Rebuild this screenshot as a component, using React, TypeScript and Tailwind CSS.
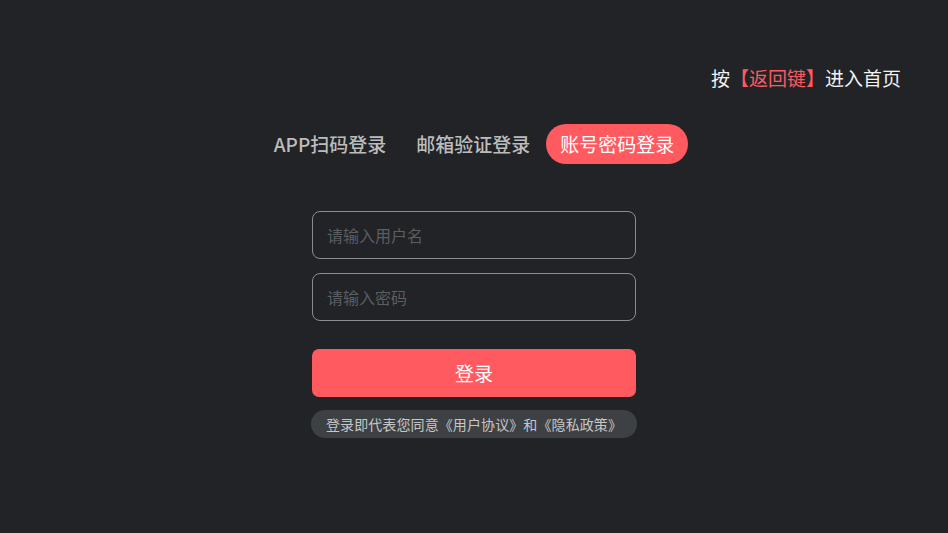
export default function App() {
  const tabs = ['APP扫码登录', '邮箱验证登录', '账号密码登录'];
  const active = 2;

  return (
    <div
      className="w-[948px] h-[533px] bg-[#212326] flex flex-col overflow-hidden"
      style={{ fontFamily: '"Noto Sans CJK SC", "Noto Sans", sans-serif' }}
    >
      {/* Back hint */}
      <div className="flex justify-end pr-[47px] pt-[65px] text-[19px] leading-[26px] text-[#f2f2f2]">
        <span>
          按<span className="text-[#ff5a5f]">【返回键】</span>进入首页
        </span>
      </div>

      {/* Tabs */}
      <div className="flex justify-center mt-[33px] gap-[2px]">
        {tabs.map((t, i) => (
          <button
            key={t}
            className={
              i === active
                ? 'h-[40px] px-[14px] rounded-full bg-[#ff5a5f] text-white text-[19px] leading-[40px]'
                : 'h-[40px] px-[14px] rounded-full text-[#bcbcbc] text-[19px] font-medium leading-[40px]'
            }
          >
            {t}
          </button>
        ))}
      </div>

      {/* Form */}
      <div className="flex flex-col items-center mt-[47px]">
        <div className="w-[324px] flex flex-col gap-[14px]">
          <input
            type="text"
            placeholder="请输入用户名"
            className="h-[48px] w-full rounded-[8px] border border-[#8a8c8e] bg-transparent px-[14px] text-[16px] text-white placeholder:text-[#5b5e62] outline-none"
          />
          <input
            type="password"
            placeholder="请输入密码"
            className="h-[48px] w-full rounded-[8px] border border-[#8a8c8e] bg-transparent px-[14px] text-[16px] text-white placeholder:text-[#5b5e62] outline-none"
          />
        </div>

        <button className="mt-[28px] w-[324px] h-[48px] rounded-[7px] bg-[#ff5a5f] text-white text-[19px]">
          登录
        </button>

        <div className="mt-[13px] h-[28px] px-[15px] rounded-full bg-[#3e4144] text-[#c6c6c6] text-[14px] leading-[28px] tracking-[0.1px]">
          登录即代表您同意《用户协议》和《隐私政策》
        </div>
      </div>
    </div>
  );
}
